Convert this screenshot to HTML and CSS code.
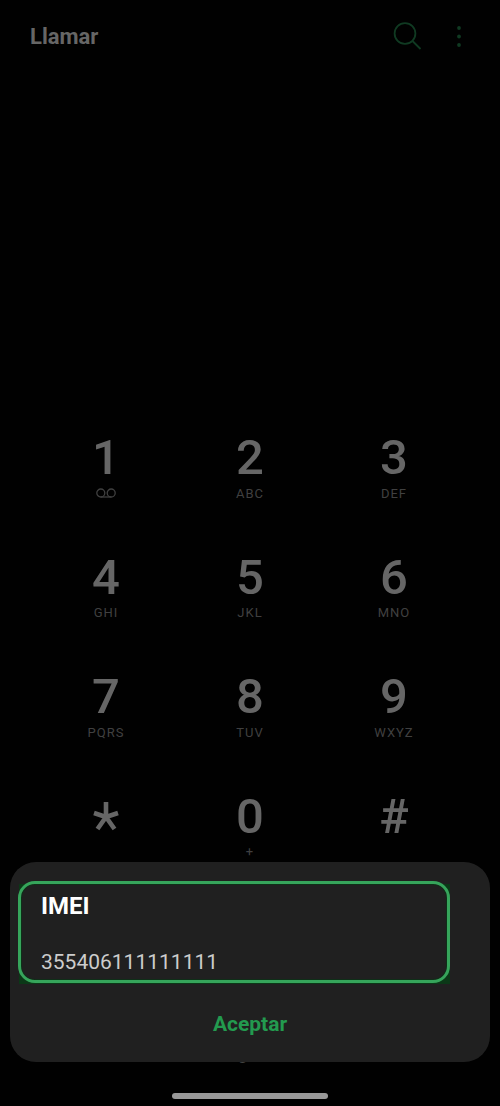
FILE: index.html
```
<!DOCTYPE html>
<html lang="es">
<head>
<meta charset="UTF-8">
<meta name="viewport" content="width=device-width, initial-scale=1">
<title>Llamar</title>
<link rel="stylesheet" href="styles.css">
</head>
<body>

  <div class="dialer">
    <header class="topbar">
      <h1>Llamar</h1>
      <button class="icon-btn" type="button" aria-label="Buscar">
        <svg width="30" height="30" viewBox="0 0 30 30" fill="none" stroke="currentColor" stroke-width="1.8">
          <circle cx="13" cy="11.5" r="10.4"/>
          <path d="M20.5 19L28.5 27"/>
        </svg>
      </button>
      <button class="icon-btn" type="button" aria-label="Más opciones">
        <svg width="30" height="30" viewBox="0 0 30 30" fill="currentColor">
          <circle cx="15" cy="6" r="1.9"/>
          <circle cx="15" cy="14.5" r="1.9"/>
          <circle cx="15" cy="23" r="1.9"/>
        </svg>
      </button>
    </header>

    <main class="keypad">
      <button class="key" type="button" aria-label="1, buzón de voz">
        <span class="digit">1</span>
        <span class="letters">
          <svg width="20" height="10" viewBox="0 0 20 10" fill="none" stroke="currentColor" stroke-width="1.3">
            <circle cx="4.8" cy="5" r="4"/>
            <circle cx="15.2" cy="5" r="4"/>
            <path d="M4.8 9H15.2"/>
          </svg>
        </span>
      </button>
      <button class="key" type="button"><span class="digit">2</span><span class="letters">ABC</span></button>
      <button class="key" type="button"><span class="digit">3</span><span class="letters">DEF</span></button>
      <button class="key" type="button"><span class="digit">4</span><span class="letters">GHI</span></button>
      <button class="key" type="button"><span class="digit">5</span><span class="letters">JKL</span></button>
      <button class="key" type="button"><span class="digit">6</span><span class="letters">MNO</span></button>
      <button class="key" type="button"><span class="digit">7</span><span class="letters">PQRS</span></button>
      <button class="key" type="button"><span class="digit">8</span><span class="letters">TUV</span></button>
      <button class="key" type="button"><span class="digit">9</span><span class="letters">WXYZ</span></button>
      <button class="key" type="button" aria-label="Asterisco">
        <span class="digit">
          <svg class="star" width="26" height="50" viewBox="0 0 26 50" fill="none" stroke="currentColor" stroke-width="4.6">
            <path d="M13 14V29M1 25L13 29L25 25M4.5 41L13 29L21.5 41"/>
          </svg>
        </span>
      </button>
      <button class="key" type="button"><span class="digit">0</span><span class="letters">+</span></button>
      <button class="key" type="button"><span class="digit">#</span></button>
    </main>

    <nav class="tabs">
      <a href="#registro">Registro</a>
    </nav>
    <div class="home-bar"></div>
  </div>

  <!-- IMEI dialog -->
  <div class="overlay">
    <section class="dialog" role="dialog" aria-labelledby="imei-title">
      <div class="highlight">
        <h2 id="imei-title">IMEI</h2>
        <p>355406111111111</p>
      </div>
      <button class="accept" type="button">Aceptar</button>
    </section>
  </div>

</body>
</html>
```
FILE: styles.css
```
* {
  box-sizing: border-box;
}

body {
  margin: 0;
  background: #010101;
  color: #666;
  font-family: Roboto, "Liberation Sans", sans-serif;
}

button {
  padding: 0;
  border: 0;
  background: none;
  color: inherit;
  font-family: inherit;
  cursor: pointer;
}

.dialer {
  display: flex;
  flex-direction: column;
  min-height: 100vh;
}

/* Top bar */
.topbar {
  display: flex;
  align-items: center;
  gap: 22px;
  padding: 21px 26px 0 30px;
}

.topbar h1 {
  flex: 1;
  margin: 0;
  font-size: 22px;
  line-height: 32px;
  font-weight: 700;
}

.icon-btn {
  display: flex;
  color: #103a22;
}

/* Keypad */
.keypad {
  display: grid;
  grid-template-columns: repeat(3, 1fr);
  grid-template-rows: repeat(4, 1fr);
  height: 478px;
  margin-top: auto;
  padding: 0 34px;
}

.key {
  display: flex;
  flex-direction: column;
  align-items: center;
  justify-content: flex-start;
}

.digit {
  height: 56px;
  font-size: 49px;
  font-weight: 500;
  line-height: 58px;
}

.star {
  display: block;
}

.letters {
  display: flex;
  align-items: center;
  height: 16px;
  color: #404040;
  font-size: 13px;
  letter-spacing: 1px;
}

/* Bottom navigation */
.tabs {
  display: flex;
  justify-content: center;
  padding: 137px 0 29px;
}

.tabs a {
  color: #444;
  font-size: 17px;
  line-height: 20px;
  text-decoration: none;
}

.home-bar {
  width: 156px;
  height: 6px;
  margin: 0 auto 7px;
  border-radius: 3px;
  background: #989898;
}

/* Dialog */
.overlay {
  position: fixed;
  inset: 0;
  display: flex;
  align-items: flex-end;
  padding: 0 10px 44px;
}

.dialog {
  flex: 1;
  display: flex;
  flex-direction: column;
  padding: 19px 40px 22px 8px;
  border-radius: 26px;
  background: #202020;
  isolation: isolate;
}

.highlight {
  position: relative;
  padding: 8px 20px 5px;
  border: 3px solid #36a55b;
  border-radius: 17px;
  background: #202020;
  box-shadow: inset 0 0 0 1px #0f2f18;
}

/* dark green corners behind the rounded frame */
.highlight::before {
  content: "";
  position: absolute;
  inset: 0 -3px -4px -2px;
  z-index: -1;
  background: #0b3817;
}

.highlight h2 {
  margin: 0;
  color: #fff;
  font-size: 24px;
  line-height: 28px;
  font-weight: 700;
}

.highlight p {
  margin: 29px 0 0;
  color: #ccc;
  font-size: 21px;
  line-height: 26px;
}

.accept {
  align-self: center;
  margin: 25px 0 0 32px;
  color: #239a4f;
  font-size: 21px;
  line-height: 32px;
  font-weight: 700;
}
```
